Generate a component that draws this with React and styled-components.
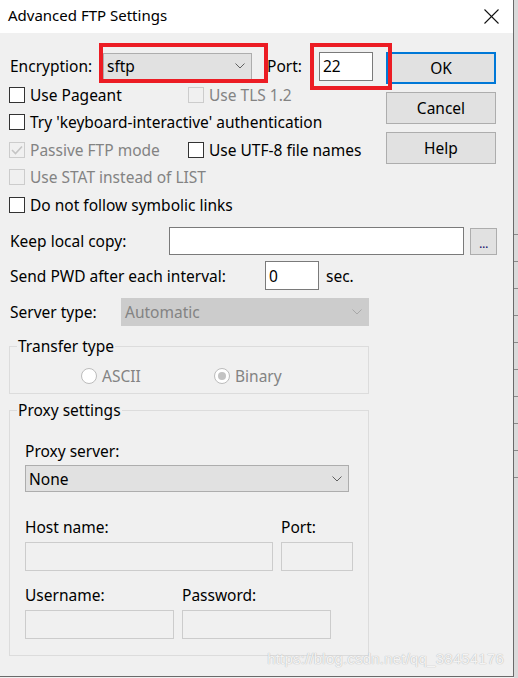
import styled, { createGlobalStyle } from "styled-components";

const GlobalStyle = createGlobalStyle`
  html, body {
    margin: 0;
    padding: 0;
    background: #f0f0f0;
  }
  * {
    box-sizing: border-box;
  }
`;

const Screen = styled.div`
  display: flex;
  width: 518px;
  height: 678px;
  overflow: hidden;
  font-family: "Noto Sans", "Open Sans", sans-serif;
  font-size: 15.5px;
  color: #000;
`;

const Window = styled.div`
  position: relative;
  width: 514px;
  height: 677px;
  background: #f0f0f0;
  border-right: 1px solid #6a6a6a;
  border-bottom: 1px solid #6a6a6a;
  display: flex;
  flex-direction: column;
`;

const BehindStrip = styled.div`
  flex: 1;
  height: 678px;
  background: #dadada;
  background-image: repeating-linear-gradient(
    to bottom,
    transparent 0,
    transparent 26px,
    #8a8a8a 26px,
    #8a8a8a 27px
  );
  background-position: 0 208px;
  background-size: 100% 270px;
  background-repeat: no-repeat;
`;

const TitleBar = styled.div`
  height: 33px;
  background: #fff;
  display: flex;
  align-items: center;
  justify-content: space-between;
  padding: 0 14px 0 8px;
`;

const Title = styled.span`
  font-size: 15px;
  line-height: 20px;
  margin-top: -3px;
`;

const Body = styled.div`
  padding: 18px 0 0 9px;
  display: flex;
  flex-direction: column;
`;

const TopSection = styled.div`
  display: flex;
  gap: 17px;
`;

const LeftCol = styled.div`
  width: 360px;
  display: flex;
  flex-direction: column;
`;

const ButtonCol = styled.div`
  display: flex;
  flex-direction: column;
  gap: 8px;
  padding-top: 1px;
`;

const Button = styled.div`
  width: 110px;
  height: 32px;
  display: flex;
  align-items: center;
  justify-content: center;
  background: #e1e1e1;
  border: ${(p) => (p.$default ? "2px solid #0078d7" : "1px solid #adadad")};
`;

const FirstRow = styled.div`
  position: relative;
  display: flex;
  align-items: center;
  height: 30px;
`;

const Highlight = styled.div`
  position: absolute;
  border: 4px solid #ec1c24;
  left: ${(p) => p.$left}px;
  top: ${(p) => p.$top}px;
  width: ${(p) => p.$w}px;
  height: ${(p) => p.$h}px;
`;

const Label = styled.span`
  display: inline-block;
  flex: none;
  width: ${(p) => (p.$w ? `${p.$w}px` : "auto")};
  padding-left: ${(p) => p.$pl || 0}px;
  color: ${(p) => (p.$disabled ? "#838383" : "#000")};
  white-space: nowrap;
  line-height: 20px;
`;

const ComboBox = styled.div`
  flex: none;
  width: ${(p) => p.$w}px;
  height: ${(p) => p.$h || 27}px;
  display: flex;
  align-items: center;
  justify-content: space-between;
  padding: 0 6px 0 3px;
  background: ${(p) => (p.$disabled ? "#cccccc" : "#e1e1e1")};
  border: 1px solid ${(p) => (p.$disabled ? "#cccccc" : "#adadad")};
  color: ${(p) => (p.$disabled ? "#838383" : "#000")};
`;

const TextBox = styled.div`
  flex: none;
  width: ${(p) => p.$w}px;
  height: ${(p) => p.$h || 29}px;
  display: flex;
  align-items: center;
  padding-left: 3px;
  background: ${(p) => (p.$disabled ? "#f0f0f0" : "#fff")};
  border: 1px solid ${(p) => (p.$disabled ? "#cccccc" : "#7a7a7a")};
`;

const CheckRow = styled.div`
  display: flex;
  align-items: center;
  height: 27.5px;
`;

const CheckItem = styled.div`
  display: flex;
  align-items: center;
  gap: 5px;
  width: ${(p) => (p.$w ? `${p.$w}px` : "auto")};
`;

const Box = styled.div`
  width: 16px;
  height: 16px;
  flex: none;
  display: flex;
  align-items: center;
  justify-content: center;
  background: ${(p) => (p.$disabled ? "#f0f0f0" : "#fff")};
  border: 1px solid ${(p) => (p.$disabled ? "#cccccc" : "#333")};
`;

const FieldRow = styled.div`
  display: flex;
  align-items: center;
  margin-top: ${(p) => p.$mt}px;
`;

const DotsButton = styled.div`
  width: 27px;
  height: 27px;
  margin-left: 6px;
  background: #e1e1e1;
  border: 1px solid #adadad;
  display: flex;
  align-items: flex-end;
  justify-content: center;
  padding-bottom: 6px;
  font-size: 13px;
  line-height: 10px;
  letter-spacing: -0.5px;
  color: #1a1a6e;
`;

const Group = styled.fieldset`
  width: 360px;
  margin: ${(p) => p.$mt}px 0 0 0;
  padding: ${(p) => p.$pad};
  border: 1px solid #dcdcdc;
  min-width: 0;
`;

const Legend = styled.legend`
  margin-left: 7px;
  padding: 0 1px;
  line-height: 20px;
  font-size: 15.5px;
`;

const GroupInner = styled.div`
  padding-left: 15px;
  display: flex;
  flex-direction: column;
  align-items: flex-start;
`;

const RadioRow = styled.div`
  display: flex;
  align-items: center;
  height: 28px;
  padding-left: 71px;
`;

const RadioItem = styled.div`
  display: flex;
  align-items: center;
  gap: 5px;
  width: ${(p) => p.$w}px;
`;

const Radio = styled.div`
  width: 16px;
  height: 16px;
  border-radius: 50%;
  border: 1px solid #bcbcbc;
  background: #fff;
  display: flex;
  align-items: center;
  justify-content: center;

  &::after {
    content: "";
    width: 8px;
    height: 8px;
    border-radius: 50%;
    background: ${(p) => (p.$checked ? "#c3c3c3" : "transparent")};
  }
`;

const StackLabel = styled.div`
  line-height: 20px;
  margin-top: ${(p) => p.$mt || 0}px;
`;

const Pair = styled.div`
  display: flex;
  gap: ${(p) => p.$gap}px;
  margin-top: ${(p) => p.$mt}px;
`;

const PairCol = styled.div`
  display: flex;
  flex-direction: column;
  gap: 5px;
`;

const Watermark = styled.div`
  position: absolute;
  right: 9px;
  bottom: 9px;
  font-family: "Liberation Sans", Arial, sans-serif;
  font-size: 15px;
  color: rgba(255, 255, 255, 0.85);
  text-shadow: 0 0 1px #b4b4b4, 0 0 1px #c8c8c8;
  letter-spacing: 0.2px;
`;

const Chevron = ({ color = "#606060" }) => (
  <svg width="10" height="6" viewBox="0 0 10 6">
    <polyline points="0.5,0.5 5,5 9.5,0.5" fill="none" stroke={color} strokeWidth="1" />
  </svg>
);

const Check = () => (
  <svg width="12" height="10" viewBox="0 0 12 10">
    <polyline points="1,5 4.5,8.5 11,1.5" fill="none" stroke="#c4c4c4" strokeWidth="1.6" />
  </svg>
);

const CloseIcon = () => (
  <svg width="15" height="15" viewBox="0 0 15 15">
    <line x1="0.5" y1="0.5" x2="14.5" y2="14.5" stroke="#111" strokeWidth="1.1" />
    <line x1="14.5" y1="0.5" x2="0.5" y2="14.5" stroke="#111" strokeWidth="1.1" />
  </svg>
);

function CheckOption({ label, checked, disabled, w }) {
  return (
    <CheckItem $w={w}>
      <Box $disabled={disabled}>{checked && <Check />}</Box>
      <Label $disabled={disabled}>{label}</Label>
    </CheckItem>
  );
}

export default function App() {
  return (
    <>
      <GlobalStyle />
      <Screen>
        <Window>
          <TitleBar>
            <Title>Advanced FTP Settings</Title>
            <CloseIcon />
          </TitleBar>
          <Body>
            <TopSection>
              <LeftCol>
                <FirstRow>
                  <Label $w={94} $pl={1}>
                    Encryption:
                  </Label>
                  <ComboBox $w={149}>
                    <span>sftp</span>
                    <Chevron />
                  </ComboBox>
                  <Label $w={67} $pl={15}>
                    Port:
                  </Label>
                  <TextBox $w={54}>22</TextBox>
                  <Highlight $left={90} $top={-8} $w={169} $h={40} />
                  <Highlight $left={301} $top={-8} $w={82} $h={47} />
                </FirstRow>
                <CheckRow>
                  <CheckOption label="Use Pageant" w={179} />
                  <CheckOption label="Use TLS 1.2" disabled />
                </CheckRow>
                <CheckRow>
                  <CheckOption label="Try 'keyboard-interactive' authentication" />
                </CheckRow>
                <CheckRow>
                  <CheckOption label="Passive FTP mode" checked disabled w={179} />
                  <CheckOption label="Use UTF-8 file names" />
                </CheckRow>
                <CheckRow>
                  <CheckOption label="Use STAT instead of LIST" disabled />
                </CheckRow>
                <CheckRow>
                  <CheckOption label="Do not follow symbolic links" />
                </CheckRow>
              </LeftCol>
              <ButtonCol>
                <Button $default>OK</Button>
                <Button>Cancel</Button>
                <Button>Help</Button>
              </ButtonCol>
            </TopSection>

            <FieldRow $mt={8.5}>
              <Label $w={160} $pl={1}>
                Keep local copy:
              </Label>
              <TextBox $w={295} $h={28} />
              <DotsButton>...</DotsButton>
            </FieldRow>

            <FieldRow $mt={6}>
              <Label $w={256} $pl={1}>
                Send PWD after each interval:
              </Label>
              <TextBox $w={54}>0</TextBox>
              <Label style={{ marginLeft: 7 }}>sec.</Label>
            </FieldRow>

            <FieldRow $mt={8}>
              <Label $w={112} $pl={1}>
                Server type:
              </Label>
              <ComboBox $w={248} $h={28} $disabled>
                <span>Automatic</span>
                <Chevron color="#a8a8a8" />
              </ComboBox>
            </FieldRow>

            <Group $mt={10} $pad="6px 0 3px 0">
              <Legend>Transfer type</Legend>
              <RadioRow>
                <RadioItem $w={133}>
                  <Radio />
                  <Label $disabled>ASCII</Label>
                </RadioItem>
                <RadioItem $w={100}>
                  <Radio $checked />
                  <Label $disabled>Binary</Label>
                </RadioItem>
              </RadioRow>
            </Group>

            <Group $mt={6} $pad="11px 0 16px 0">
              <Legend>Proxy settings</Legend>
              <GroupInner>
                <StackLabel $mt={10}>Proxy server:</StackLabel>
                <ComboBox $w={324} style={{ marginTop: 4 }}>
                  <span>None</span>
                  <Chevron />
                </ComboBox>
                <Pair $gap={8} $mt={25}>
                  <PairCol>
                    <StackLabel>Host name:</StackLabel>
                    <TextBox $w={248} $disabled />
                  </PairCol>
                  <PairCol>
                    <StackLabel>Port:</StackLabel>
                    <TextBox $w={72} $disabled />
                  </PairCol>
                </Pair>
                <Pair $gap={8} $mt={14}>
                  <PairCol>
                    <StackLabel>Username:</StackLabel>
                    <TextBox $w={149} $disabled />
                  </PairCol>
                  <PairCol>
                    <StackLabel>Password:</StackLabel>
                    <TextBox $w={149} $disabled />
                  </PairCol>
                </Pair>
              </GroupInner>
            </Group>
          </Body>
          <Watermark>https://blog.csdn.net/qq_38454176</Watermark>
        </Window>
        <BehindStrip />
      </Screen>
    </>
  );
}
